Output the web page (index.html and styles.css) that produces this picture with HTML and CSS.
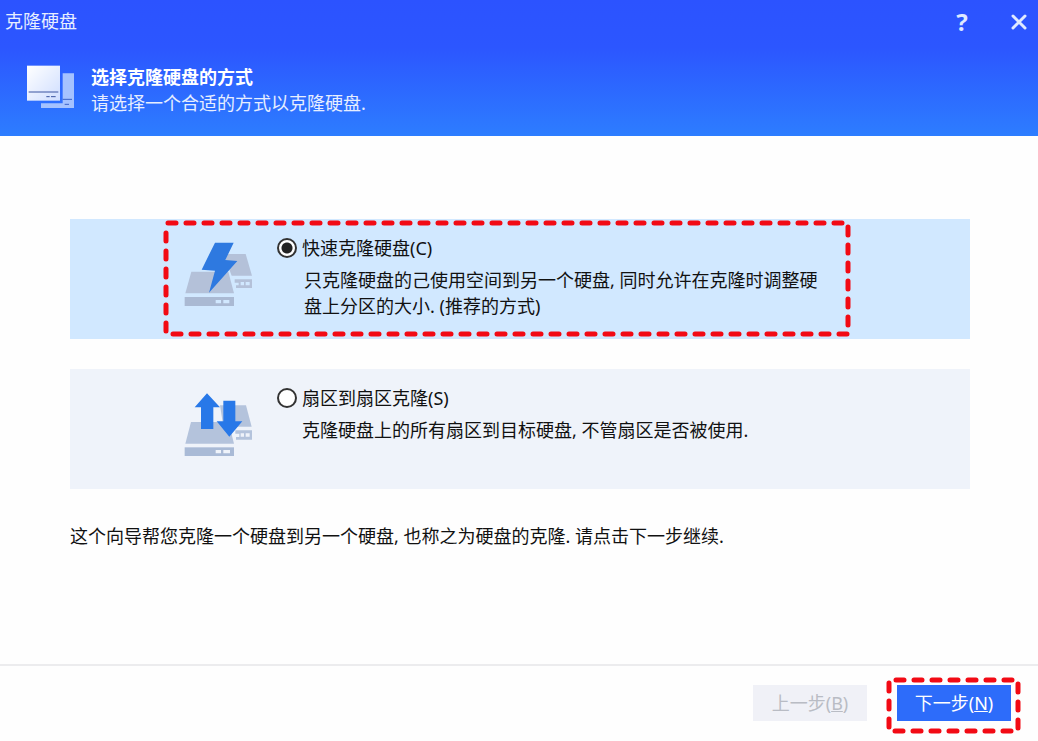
FILE: index.html
```html
<!DOCTYPE html>
<html lang="zh-CN">
<head>
    <meta charset="UTF-8">
    <meta name="viewport" content="width=device-width, initial-scale=1.0">
    <title>克隆硬盘</title>
    <link rel="stylesheet" href="styles.css">
</head>
<body>

    <header class="header">
        <div class="titlebar">
            <span class="window-title">克隆硬盘</span>
            <div class="window-buttons">
                <button class="window-button" type="button" aria-label="帮助">?</button>
                <button class="window-button" type="button" aria-label="关闭">
                    <svg width="16" height="16" viewBox="0 0 16 16">
                        <path d="M2 2 L14 14 M14 2 L2 14" fill="none" stroke="#dfe9ff" stroke-width="3" stroke-linecap="round"/>
                    </svg>
                </button>
            </div>
        </div>
        <div class="intro">
            <svg width="50" height="45" viewBox="30 27 150 135">
                <defs>
                    <linearGradient id="disk" x1="0" y1="0" x2="1" y2="1">
                        <stop offset="0" stop-color="#ffffff"/>
                        <stop offset="1" stop-color="#cfdeff"/>
                    </linearGradient>
                </defs>
                <path d="M143 55 H177 V159 H78 V145 H143 Z" fill="#a5c2ff"/>
                <path d="M143 133 H171 M149 148 H162" stroke="#3a62c8" stroke-width="3"/>
                <rect x="36" y="32" width="99" height="105" fill="url(#disk)"/>
                <path d="M41 111 H130 M94 125 H104 M108 125 H122" stroke="#3a55a0" stroke-width="3"/>
            </svg>
            <div class="intro-text">
                <h1>选择克隆硬盘的方式</h1>
                <p>请选择一个合适的方式以克隆硬盘.</p>
            </div>
        </div>
    </header>

    <main class="content">
        <div class="option selected">
            <svg class="option-icon" width="70" height="68" viewBox="72 90 210 204">
                <path d="M190 132 H257 L276 197 H215 Z" fill="#b4c1d9"/>
                <path d="M224 208 H276 V234 H228 V226 H236 V218 H224 Z" fill="#b4c1d9"/>
                <path d="M242 216 h10 v10 h-10 Z M257 216 h12 v10 h-12 Z" fill="#d1e8ff"/>
                <path d="M94 185 H205 L222 250 H76 Z" fill="#b4c1d9"/>
                <rect x="74" y="261" width="148" height="27" fill="#aab9d3"/>
                <path d="M167 270 h16 v10 h-16 Z M190 270 h18 v10 h-18 Z" fill="#d1e8ff"/>
                <path d="M165 98 H221 L196 150 L232 153 L147 248 L165 182 L125 179 Z" fill="#2e79e0"/>
            </svg>
            <div class="option-body">
                <label class="option-title"><input type="radio" name="mode" checked>快速克隆硬盘(C)</label>
                <p class="option-text">只克隆硬盘的己使用空间到另一个硬盘, 同时允许在克隆时调整硬盘上分区的大小. (推荐的方式)</p>
            </div>
            <svg class="marker option-marker"><rect class="marker-line" width="100%" height="100%"/></svg>
        </div>

        <div class="option">
            <svg class="option-icon" width="70" height="68" viewBox="42 60 210 204">
                <path d="M150 106 H228 L245 170 H160 Z" fill="#b4c3dc"/>
                <path d="M196 181 H246 V209 H198 V201 H208 V191 H196 Z" fill="#b4c3dc"/>
                <path d="M212 190 h10 v10 h-10 Z M227 190 h12 v10 h-12 Z" fill="#eff3fa"/>
                <path d="M63 156 H176 L192 221 H46 Z" fill="#b4c3dc"/>
                <rect x="44" y="232" width="148" height="26" fill="#a9bad6"/>
                <path d="M137 240 h16 v10 h-16 Z M160 240 h20 v10 h-20 Z" fill="#eff3fa"/>
                <path d="M111 70 L150 112 H130 V177 H93 V112 H74 Z" fill="#2878e8"/>
                <path d="M160 92 H196 V154 H217 L178 200 L140 154 H160 Z" fill="#2878e8"/>
            </svg>
            <div class="option-body">
                <label class="option-title"><input type="radio" name="mode">扇区到扇区克隆(S)</label>
                <p class="option-text">克隆硬盘上的所有扇区到目标硬盘, 不管扇区是否被使用.</p>
            </div>
        </div>

        <p class="note">这个向导帮您克隆一个硬盘到另一个硬盘, 也称之为硬盘的克隆. 请点击下一步继续.</p>
    </main>

    <footer class="footer">
        <button class="step" type="button" disabled>上一步(<u>B</u>)</button>
        <div class="next">
            <button class="step primary" type="button">下一步(<u>N</u>)</button>
            <svg class="marker next-marker"><rect class="marker-line" width="100%" height="100%"/></svg>
        </div>
    </footer>

</body>
</html>
```

FILE: styles.css
```css
* {
    padding: 0;
    margin: 0;
    box-sizing: border-box;
}

body {
    min-height: 100vh;
    display: flex;
    flex-direction: column;
    font-family: "Noto Sans", "Noto Sans CJK SC", sans-serif;
    font-size: 18px;
    line-height: 26px;
    color: #111;
    background-color: #fefefe;
}

button,
input {
    font: inherit;
}

.header {
    height: 136px;
    color: #e6eeff;
    background: linear-gradient(#2c53ff 0%, #2c56ff 35%, #2d7dff 100%);
}

.titlebar {
    display: flex;
    justify-content: space-between;
    padding: 8px 10px 0 5px;
}

.window-buttons {
    display: flex;
    gap: 39px;
}

.window-button {
    display: flex;
    align-items: center;
    justify-content: center;
    width: 18px;
    height: 28px;
    border: none;
    background: none;
    color: #dfe9ff;
    font-size: 24px;
    font-weight: bold;
}

.intro {
    display: flex;
    gap: 16px;
    padding: 28px 25px 0;
}

.intro h1 {
    font-size: 18px;
    font-weight: bold;
    color: white;
}

.content {
    flex: 1;
    padding: 83px 68px 0 70px;
}

.option {
    position: relative;
    display: flex;
    gap: 23px;
    min-height: 120px;
    margin-bottom: 30px;
    padding: 16px 114px 0;
    background-color: #eff3fa;
}

.option.selected {
    background-color: #d1e8ff;
}

.option-icon {
    flex: none;
    margin-top: 5px;
}

.option-title {
    display: flex;
    align-items: center;
    gap: 5px;
}

.option-title input {
    appearance: none;
    width: 20px;
    height: 20px;
    border: 2px solid #333;
    border-radius: 50%;
    background-color: white;
}

.option-title input:checked {
    background-image: radial-gradient(circle, #222 5px, transparent 6px);
}

.option-text {
    max-width: 544px;
    margin-top: 6px;
    padding-left: 25px;
}

.selected .option-text {
    padding-left: 27px;
}

.marker {
    position: absolute;
    overflow: visible;
}

.marker-line {
    fill: none;
    stroke: #f20a14;
    stroke-width: 5px;
    stroke-linecap: round;
    stroke-dasharray: 8 10;
    stroke-dashoffset: -2px;
}

.option-marker {
    top: 4px;
    left: 96px;
    width: calc(100% - 218px);
    height: 111px;
}

.note {
    margin-top: 34px;
}

.footer {
    display: flex;
    justify-content: flex-end;
    gap: 30px;
    padding: 19px 27px 20px;
    border-top: 2px solid #ececee;
}

.step {
    width: 114px;
    height: 36px;
    border: none;
    color: #b9bcc4;
    background-color: #f0f1f7;
}

.step.primary {
    color: white;
    background-color: #2d6cfa;
}

.next {
    position: relative;
    height: 36px;
}

.next-marker {
    top: -5px;
    left: -8px;
    width: calc(100% + 15px);
    height: 51px;
}

.next-marker .marker-line {
    stroke-dashoffset: -7px;
}
```
